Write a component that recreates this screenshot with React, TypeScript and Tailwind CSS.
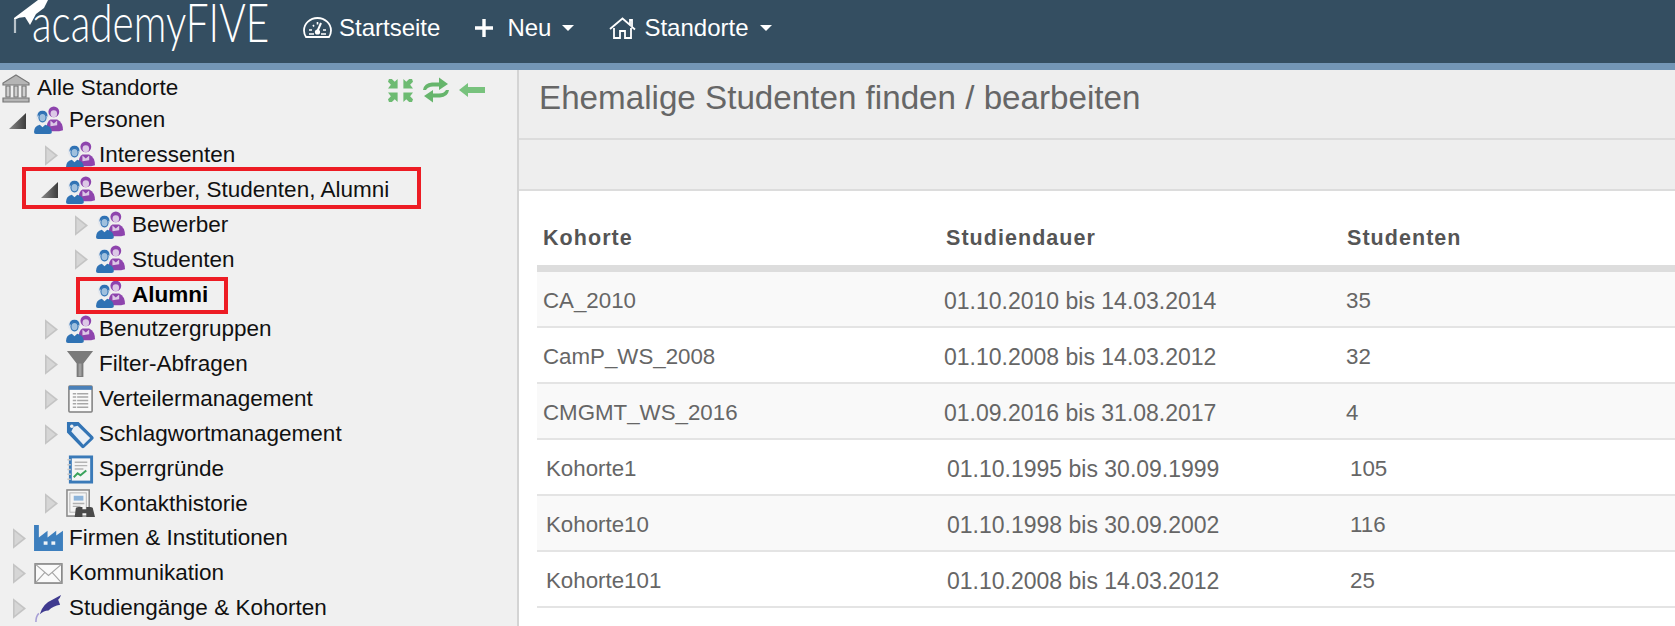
import React from 'react';

const UserPair = () => (
  <svg viewBox="0 0 30 30" className="w-[29px] h-[29px] shrink-0">
    <circle cx="20.5" cy="6" r="5.6" fill="#8e44ad" />
    <path d="M13 24 Q13 16 17 14 L24 14 Q30 17 30 25 L26 26 L14 26 Z" fill="#8e44ad" />
    <ellipse cx="20.5" cy="8" rx="3.4" ry="3.6" fill="#dcc8e6" />
    <path d="M17 15 L20.5 18 L24 15 L24 20 L17 21 Z" fill="#dcc8e6" />
    <circle cx="8.6" cy="11" r="6.6" fill="#e4e8ee" />
    <path d="M3.5 11 Q3.5 5 8.8 5 Q14 5 14 11 L12.6 10 Q9 10 5 9.5 Z" fill="#2f72b4" />
    <ellipse cx="8.8" cy="12" rx="3.7" ry="4.4" fill="#9fc0de" stroke="#2f72b4" strokeWidth="1.1" />
    <path d="M0 27 Q0 21 6 19.5 L8.8 22 L11.6 19.5 Q18 21 18.5 27 Q18.5 29 16 29 L2 29 Q0 29 0 27 Z" fill="#2f72b4" />
  </svg>
);

const Bank = () => (
  <svg viewBox="0 0 28 29" className="w-[28px] h-[29px] shrink-0">
    <path d="M14 1 L27 9 L27 11 L1 11 L1 9 Z" fill="#b5b5b5" stroke="#777" strokeWidth="1.2" />
    <path d="M4 12 h4 v11 h-4 Z M12 12 h4 v11 h-4 Z M20 12 h4 v11 h-4 Z" fill="#cfcfcf" stroke="#777" strokeWidth="1.2" />
    <path d="M1 24 h26 v4 h-26 Z" fill="#b5b5b5" stroke="#777" strokeWidth="1.2" />
  </svg>
);

const Funnel = () => (
  <svg viewBox="0 0 30 30" className="w-[29px] h-[29px] shrink-0">
    <path d="M1 1 H28 L18 14 V28 H11 V14 Z" fill="#7a7a7a" />
    <path d="M13 14 H16 V27 H13 Z" fill="#a0a0a0" />
  </svg>
);

const TableList = () => (
  <svg viewBox="0 0 30 30" className="w-[29px] h-[29px] shrink-0">
    <rect x="3" y="1" width="24" height="27" rx="1" fill="#fafafa" stroke="#808080" strokeWidth="1.6" />
    <rect x="3" y="1" width="24" height="4" fill="#4a80b8" />
    <path d="M7 9 H23 M7 12.5 H23 M7 16 H23 M7 19.5 H23 M7 23 H23" stroke="#a8a8a8" strokeWidth="1.6" />
    <path d="M11 8 V24" stroke="#fafafa" strokeWidth="1" />
  </svg>
);

const Tag = () => (
  <svg viewBox="0 0 30 30" className="w-[29px] h-[29px] shrink-0">
    <path d="M1 2 H13 L28 17 Q29.5 18.5 28 20 L19 28.5 Q17.5 30 16 28.5 L1 13 Z" fill="#3274b5" />
    <path d="M8 7 L12 6 L25 18.5 L18 25.5 L5.5 12 Z" fill="#e8eef5" />
    <circle cx="6" cy="6.5" r="1.8" fill="#f0f0f0" />
  </svg>
);

const Notebook = () => (
  <svg viewBox="0 0 30 30" className="w-[29px] h-[29px] shrink-0">
    <rect x="3" y="0.5" width="25" height="29" fill="#3a7ab8" />
    <rect x="6" y="3.5" width="19" height="23" fill="#f5f5f5" />
    <path d="M9 7.5 H22 M9 11 H22 M9 14.5 H18" stroke="#b5b5b5" strokeWidth="1.4" />
    <path d="M8 23 L12 19 L15 21 L21 16" stroke="#3aa35c" strokeWidth="2" fill="none" />
    <path d="M1.5 5 H5 M1.5 10 H5 M1.5 15 H5 M1.5 20 H5 M1.5 25 H5" stroke="#c5c5c5" strokeWidth="1.6" />
  </svg>
);

const ContactHistory = () => (
  <svg viewBox="0 0 30 30" className="w-[29px] h-[29px] shrink-0">
    <rect x="1" y="1" width="23" height="27" fill="#f5f5f5" stroke="#8a8a8a" strokeWidth="1.6" />
    <rect x="4" y="4" width="17" height="20" fill="none" stroke="#b5b5b5" strokeWidth="1" />
    <rect x="8" y="7" width="10" height="5" fill="#8db4da" />
    <path d="M7 15 H19 M7 18 H15" stroke="#b0b0b0" strokeWidth="1.4" />
    <path d="M9 29 L10 21 Q10 18.5 13 18.5 H17 V21 H21 V18.5 H25 Q28 18.5 28 21 L30 29 H21 V25 H17 V29 Z" fill="#4a4a4a" />
  </svg>
);

const Factory = () => (
  <svg viewBox="0 0 30 28" className="w-[29px] h-[27px] shrink-0">
    <path d="M0 0 H5 V13 L14 6 V13 L23 6 V11 L30 6 V27 H0 Z" fill="#3d7fbe" />
    <rect x="10" y="17" width="4" height="3.5" fill="#eef3f8" />
    <rect x="18" y="17" width="4" height="3.5" fill="#eef3f8" />
  </svg>
);

const Envelope = () => (
  <svg viewBox="0 0 30 22" className="w-[29px] h-[21px] shrink-0">
    <rect x="1" y="1" width="28" height="20" fill="#fafafa" stroke="#8a8a8a" strokeWidth="1.8" />
    <path d="M1.5 1.5 L15 13 L28.5 1.5 M1.5 20.5 L11 10 M28.5 20.5 L19 10" stroke="#a5a5a5" strokeWidth="1.2" fill="none" />
  </svg>
);

const GradCap = () => (
  <svg viewBox="0 0 30 30" className="w-[29px] h-[29px] shrink-0">
    <path d="M6 21 Q9 10 19 6 L28 1 Q27 4 25 6 L27 11 Q20 12 15 17 Q10 17 6 21 Z" fill="#3f3a8f" />
    <path d="M5 20 Q2 23 2 29" stroke="#a79fd6" strokeWidth="1.6" fill="none" />
  </svg>
);

const Arrow = ({ open }: { open?: boolean }) =>
  open ? (
    <svg viewBox="0 0 17 16" className="w-[17px] h-[16px]">
      <defs>
        <linearGradient id="dreieck" x1="0" y1="0" x2="1" y2="0">
          <stop offset="0" stopColor="#8a8a8a" />
          <stop offset="1" stopColor="#3c3c3c" />
        </linearGradient>
      </defs>
      <path d="M17 0 V16 H0 Z" fill="url(#dreieck)" />
    </svg>
  ) : (
    <svg viewBox="0 0 12 19" className="w-[13px] h-[21px] ml-[4px]">
      <path d="M0 0 L12 9.5 L0 19 Z" fill="#c4c4c4" />
      <path d="M1.5 3 L9.5 9.5 L1.5 16 Z" fill="#d6d6d6" />
    </svg>
  );

type Knoten = {
  label: string;
  level: 0 | 1 | 2;
  icon: React.ReactNode;
  arrow?: 'open' | 'closed';
  bold?: boolean;
  box?: string;
};

const baum: Knoten[] = [
  { label: 'Interessenten', level: 1, icon: <UserPair />, arrow: 'closed' },
  {
    label: 'Bewerber, Studenten, Alumni',
    level: 1,
    icon: <UserPair />,
    arrow: 'open',
    box: 'left-[22px] w-[399px] top-[-6px] h-[42px]',
  },
  { label: 'Bewerber', level: 2, icon: <UserPair />, arrow: 'closed' },
  { label: 'Studenten', level: 2, icon: <UserPair />, arrow: 'closed' },
  {
    label: 'Alumni',
    level: 2,
    icon: <UserPair />,
    bold: true,
    box: 'left-[76px] w-[152px] top-0 h-[37px]',
  },
  { label: 'Benutzergruppen', level: 1, icon: <UserPair />, arrow: 'closed' },
  { label: 'Filter-Abfragen', level: 1, icon: <Funnel />, arrow: 'closed' },
  { label: 'Verteilermanagement', level: 1, icon: <TableList />, arrow: 'closed' },
  { label: 'Schlagwortmanagement', level: 1, icon: <Tag />, arrow: 'closed' },
  { label: 'Sperrgründe', level: 1, icon: <Notebook /> },
  { label: 'Kontakthistorie', level: 1, icon: <ContactHistory />, arrow: 'closed' },
  { label: 'Firmen & Institutionen', level: 0, icon: <Factory />, arrow: 'closed' },
  { label: 'Kommunikation', level: 0, icon: <Envelope />, arrow: 'closed' },
  { label: 'Studiengänge & Kohorten', level: 0, icon: <GradCap />, arrow: 'closed' },
];

const einzug = { 0: 'pl-[9px]', 1: 'pl-[41px]', 2: 'pl-[71px]' };
const textAbstand = { 0: 'ml-[6px]', 1: 'ml-[4px]', 2: 'ml-[7px]' };

const TreeRow = ({ knoten }: { knoten: Knoten }) => (
  <div className={`relative flex items-center h-[34.85px] ${einzug[knoten.level]}`}>
    <div className="w-[25px] shrink-0 flex items-center">
      {knoten.arrow && <Arrow open={knoten.arrow === 'open'} />}
    </div>
    {knoten.icon}
    <span className={`${textAbstand[knoten.level]} whitespace-nowrap ${knoten.bold ? 'font-bold text-black' : ''}`}>
      {knoten.label}
    </span>
    {knoten.box && <div className={`absolute border-[4px] border-[#ed1c24] ${knoten.box}`} />}
  </div>
);

const Caret = () => <span className="ml-[11px] w-0 h-0 border-x-[6px] border-x-transparent border-t-[6px] border-t-white" />;

const zeilen = [
  { name: 'CA_2010', dauer: '01.10.2010 bis 14.03.2014', anzahl: '35' },
  { name: 'CamP_WS_2008', dauer: '01.10.2008 bis 14.03.2012', anzahl: '32' },
  { name: 'CMGMT_WS_2016', dauer: '01.09.2016 bis 31.08.2017', anzahl: '4' },
  { name: 'Kohorte1', dauer: '01.10.1995 bis 30.09.1999', anzahl: '105', versatz: true },
  { name: 'Kohorte10', dauer: '01.10.1998 bis 30.09.2002', anzahl: '116', versatz: true },
  { name: 'Kohorte101', dauer: '01.10.2008 bis 14.03.2012', anzahl: '25', versatz: true },
];

export default function App() {
  return (
    <div className="h-screen overflow-hidden flex flex-col bg-white font-['Liberation_Sans',Arial,sans-serif]">
      {/* Navbar */}
      <header className="h-[63px] shrink-0 bg-[#344e61] flex items-center pb-[8px] text-white text-[24px]">
        <div className="relative w-[303px] h-full shrink-0">
          <svg viewBox="0 0 60 36" className="absolute left-0 top-0 w-[60px] h-[36px]">
            <path d="M14 18 L30 6 L38 0 L48 0 L44 8 L36 14 L30 25 L25 17 Q19 17 14 20 Z" fill="#ffffff" />
            <path d="M15 19 V33" stroke="#b8c2c9" strokeWidth="2.2" />
          </svg>
          <span className="absolute left-[32px] top-[1px] origin-left scale-x-[0.75] text-[54px] leading-[42px] font-['Lato',sans-serif] font-light whitespace-nowrap">
            academyFIVE
          </span>
        </div>
        <svg viewBox="0 0 29 22" className="w-[29px] h-[22px] shrink-0">
          <path d="M3 20 Q1 17 1 13.5 A13.5 12.5 0 0 1 28 13.5 Q28 17 26 20 Z" fill="none" stroke="#fff" strokeWidth="1.8" />
          <path d="M14.5 14 L18 6" stroke="#fff" strokeWidth="2" />
          <circle cx="14.5" cy="15" r="2.6" fill="#fff" />
          <path d="M6 13 h3 M20 13 h3 M6 17 h5 M18 17 h5 M10 8 l1 1.5 M14.5 5 v2.5" stroke="#fff" strokeWidth="1.6" />
        </svg>
        <span className="ml-[7px]">Startseite</span>
        <svg viewBox="0 0 20 20" className="ml-[34px] w-[20px] h-[20px] shrink-0">
          <path d="M10 1 V19 M1 10 H19" stroke="#fff" strokeWidth="3.4" />
        </svg>
        <span className="ml-[13px]">Neu</span>
        <Caret />
        <svg viewBox="0 0 27 22" className="ml-[35px] w-[27px] h-[22px] shrink-0">
          <path d="M1 12 L13.5 1.5 L21 8 V3 H23 V10 L26 12.5" fill="none" stroke="#fff" strokeWidth="1.8" />
          <path d="M5 11 V21 H11 V14 H16 V21 H22 V11" fill="none" stroke="#fff" strokeWidth="1.8" />
        </svg>
        <span className="ml-[8px]">Standorte</span>
        <Caret />
      </header>
      <div className="h-[7px] shrink-0 bg-[#7396b6]" />

      <div className="flex-1 flex min-h-0">
        {/* Baum */}
        <aside className="w-[519px] shrink-0 bg-[#f0f0f0] border-r-2 border-[#d4d4d4] text-[22.5px] text-[#111] leading-none">
          <div className="flex items-center h-[33px] pt-[4px] pl-[2px] pr-[32px]">
            <Bank />
            <span className="ml-[7px]">Alle Standorte</span>
            <div className="ml-auto mt-[3px] flex items-center gap-[8px]">
              <svg viewBox="0 0 26 26" className="w-[25px] h-[25px]">
                <path d="M1 1 H4 L7 4 L10 1 V11 H0 L3 7 L0 4 Z M25 1 H22 L19 4 L16 1 V11 H26 L23 7 L26 4 Z M1 25 H4 L7 22 L10 25 V15 H0 L3 19 L0 22 Z M25 25 H22 L19 22 L16 25 V15 H26 L23 19 L26 22 Z" fill="#6dbb72" />
              </svg>
              <svg viewBox="0 0 30 26" className="w-[30px] h-[26px]">
                <path d="M2 13 Q3 6 11 5.5 H18 V0.5 L27 7 L18 13 V9.5 H12 Q7 9.5 5 13 Z" fill="#66b56c" />
                <path d="M28 13 Q27 20 19 20.5 H12 V25.5 L3 19 L12 13 V16.5 H18 Q23 16.5 25 13 Z" fill="#66b56c" />
              </svg>
              <svg viewBox="0 0 26 14" className="w-[26px] h-[14px]">
                <path d="M0 7 L9 0 V4 H26 V10 H9 V14 Z" fill="#78c27d" />
              </svg>
            </div>
          </div>
          <div className="relative flex items-center h-[35px] pl-[9px]">
            <div className="w-[25px] shrink-0 flex items-center">
              <Arrow open />
            </div>
            <UserPair />
            <span className="ml-[6px]">Personen</span>
          </div>
          {baum.map((knoten) => (
            <TreeRow key={knoten.label} knoten={knoten} />
          ))}
        </aside>

        {/* Inhalt */}
        <main className="flex-1 min-w-0 flex flex-col">
          <div className="h-[70px] shrink-0 bg-[#eeeeee] border-b-2 border-[#dcdcdc] flex items-center pl-[20px] pb-[12px] text-[33.2px] text-[#666]">
            Ehemalige Studenten finden / bearbeiten
          </div>
          <div className="h-[51px] shrink-0 bg-[#eeeeee] border-b-2 border-[#dcdcdc]" />
          <div className="pl-[18px] text-[22.3px] text-[#666]">
            <div className="grid grid-cols-[401px_402px_1fr] h-[81px] items-center pt-[20px] border-b-[7px] border-[#dddddd] font-bold text-[21.5px] tracking-[1.05px] text-[#555]">
              <div className="pl-[6px]">Kohorte</div>
              <div className="pl-[8px]">Studiendauer</div>
              <div className="pl-[7px]">Studenten</div>
            </div>
            {zeilen.map((z, i) => (
              <div
                key={z.name}
                className={`grid grid-cols-[401px_402px_1fr] h-[56px] items-center pt-[4px] border-b-2 border-[#e4e4e4] ${i % 2 === 0 ? 'bg-[#f9f9f9]' : 'bg-white'}`}
              >
                <div className={z.versatz ? 'pl-[9px]' : 'pl-[6px]'}>{z.name}</div>
                <div className={`text-[23px] ${z.versatz ? 'pl-[9px]' : 'pl-[6px]'}`}>{z.dauer}</div>
                <div className={z.versatz ? 'pl-[10px]' : 'pl-[6px]'}>{z.anzahl}</div>
              </div>
            ))}
          </div>
        </main>
      </div>
    </div>
  );
}
